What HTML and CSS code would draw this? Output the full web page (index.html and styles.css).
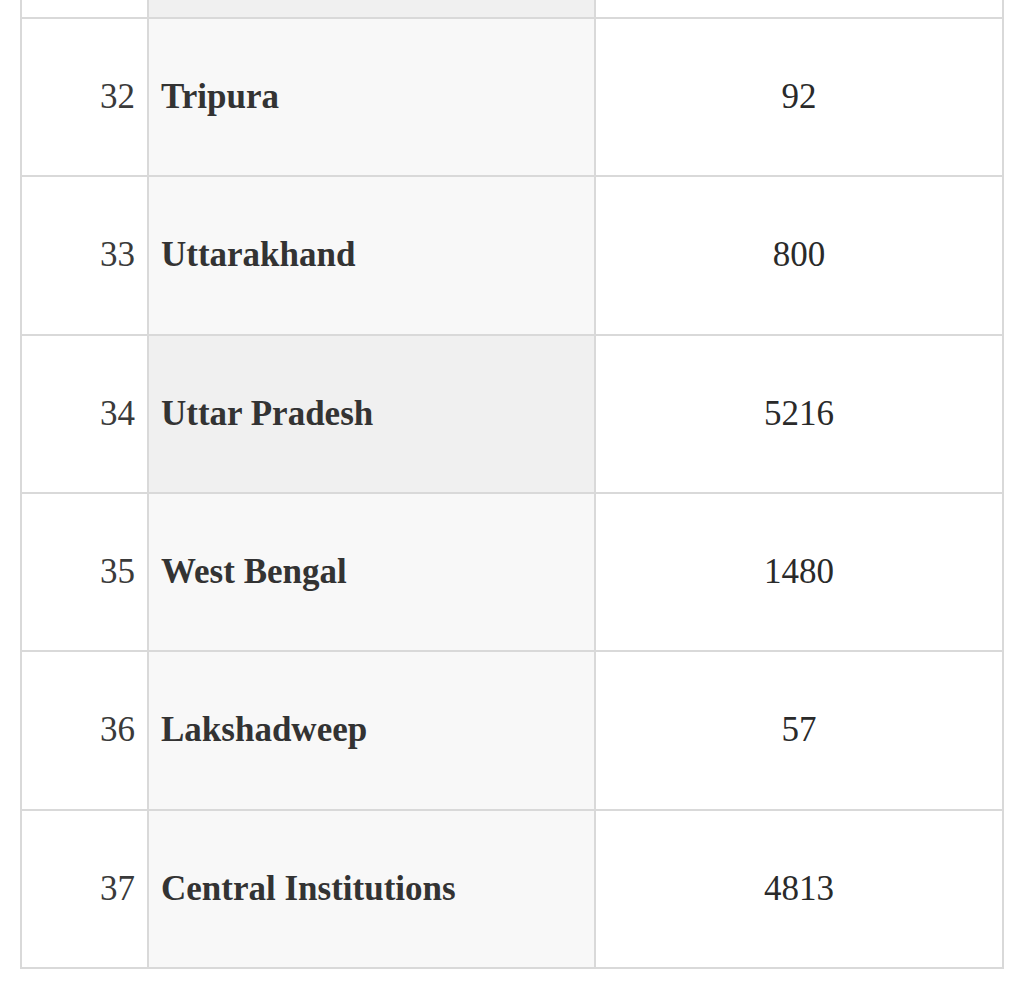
FILE: index.html
```html
<!DOCTYPE html>
<html>
<head>
<meta charset="utf-8">
<link rel="stylesheet" href="styles.css">
</head>
<body>
<table class="data">
  <colgroup>
    <col class="c-num">
    <col class="c-name">
    <col class="c-val">
  </colgroup>
  <tbody>
    <tr class="partial hl"><td></td><td class="name"></td><td></td></tr>
    <tr><td class="num">32</td><td class="name">Tripura</td><td class="val">92</td></tr>
    <tr><td class="num">33</td><td class="name">Uttarakhand</td><td class="val">800</td></tr>
    <tr class="hl"><td class="num">34</td><td class="name">Uttar Pradesh</td><td class="val">5216</td></tr>
    <tr><td class="num">35</td><td class="name">West Bengal</td><td class="val">1480</td></tr>
    <tr><td class="num">36</td><td class="name">Lakshadweep</td><td class="val">57</td></tr>
    <tr><td class="num">37</td><td class="name">Central Institutions</td><td class="val">4813</td></tr>
  </tbody>
</table>
</body>
</html>
```
FILE: styles.css
```css
html, body {
  margin: 0;
  padding: 0;
  background: #ffffff;
}
body {
  padding: 0 20px 0 20px;
  font-family: "Liberation Serif", "Times New Roman", serif;
  color: #333333;
}
.data {
  border-collapse: collapse;
  table-layout: fixed;
  width: 984px;
  font-size: 35px;
  border-bottom: 2px solid #d9d9d9;
}
.c-num { width: 127px; }
.c-name { width: 447px; }
.c-val { width: 408px; }
.data td {
  border: 2px solid #d9d9d9;
  height: 156.35px;
  padding: 0 12px;
  vertical-align: middle;
  background: #ffffff;
  line-height: 1.15;
}
.data tr.partial td {
  border-top: none;
  height: 17px;
  padding: 0;
}
.data td.name {
  background: #f8f8f8;
  font-weight: bold;
  color: #333333;
}
.data tr.hl td.name {
  background: #f0f0f0;
}
.data td.num {
  text-align: right;
  color: #3a3a3a;
}
.data td.val {
  text-align: center;
  color: #2a2a2a;
}
```
